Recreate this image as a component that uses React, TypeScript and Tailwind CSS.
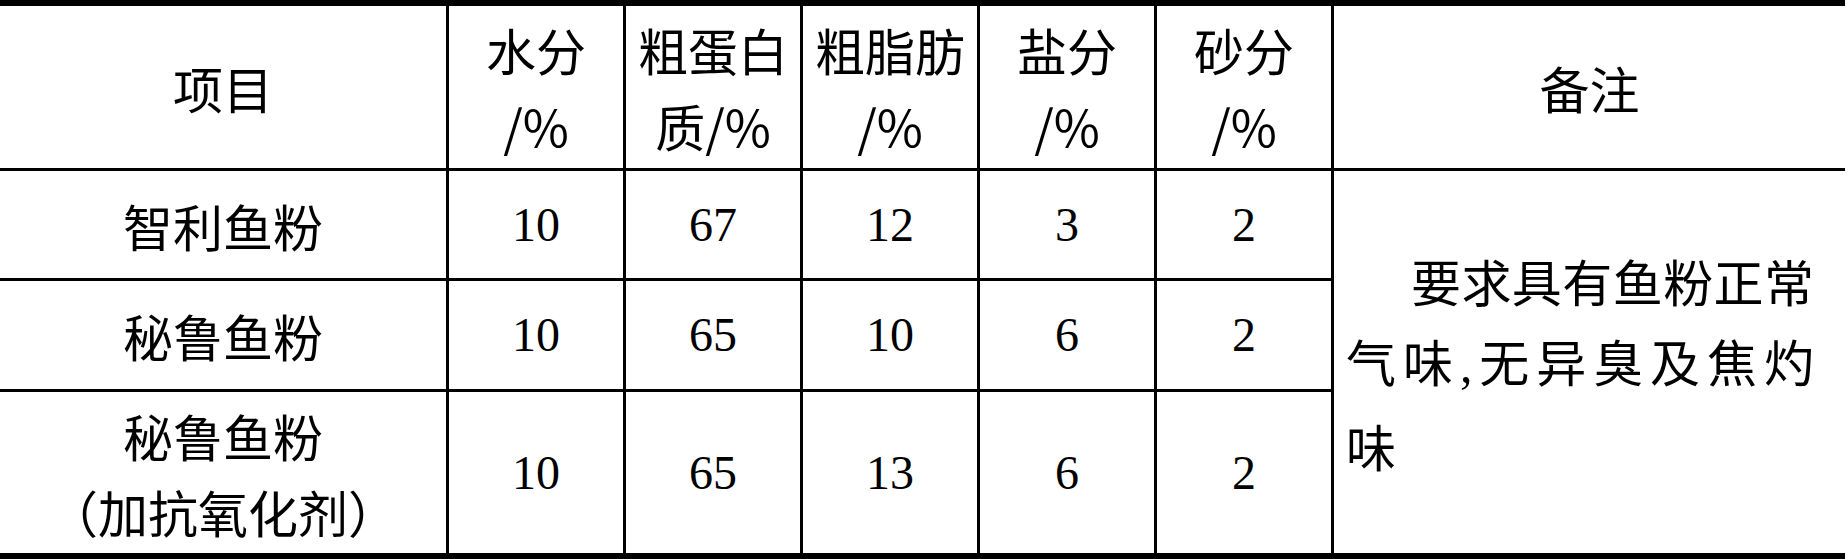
const cjk = "font-['Noto_Sans_CJK_SC','Noto_Sans_CJK_JP',sans-serif]";
const serif = "font-['Liberation_Serif','Times_New_Roman',serif]";

type Row = { name: string[]; values: string[] };

const headers: string[][] = [
  ["水分", "/%"],
  ["粗蛋白", "质/%"],
  ["粗脂肪", "/%"],
  ["盐分", "/%"],
  ["砂分", "/%"],
];

const rows: Row[] = [
  { name: ["智利鱼粉"], values: ["10", "67", "12", "3", "2"] },
  { name: ["秘鲁鱼粉"], values: ["10", "65", "10", "6", "2"] },
  { name: ["秘鲁鱼粉", "（加抗氧化剂）"], values: ["10", "65", "13", "6", "2"] },
];

function Cell({ children, className = "" }: { children: React.ReactNode; className?: string }) {
  return (
    <div className={`flex flex-col items-center justify-center bg-white text-center text-black ${className}`}>
      {children}
    </div>
  );
}

export default function App() {
  return (
    <div className="min-h-[559px] w-[1848px] bg-white">
      <div
        className={`grid w-[1845px] grid-cols-[446px_174px_174px_174px_174px_174px_511px] grid-rows-[162px_107px_108px_161px] gap-[3px] bg-black pt-[6px] pb-[6px] text-[50px] leading-[76px] ${cjk}`}
      >
        {/* header */}
        <Cell>项目</Cell>
        {headers.map((h, i) => (
          <Cell key={i}>
            {h.map((line, j) => (
              <span key={j} className="block whitespace-nowrap">
                {line}
              </span>
            ))}
          </Cell>
        ))}
        <Cell>备注</Cell>

        {/* body */}
        {rows.map((r, ri) => (
          <RowCells key={ri} row={r} first={ri === 0} />
        ))}
      </div>
    </div>
  );
}

function RowCells({ row, first }: { row: Row; first: boolean }) {
  return (
    <>
      <Cell>
        {row.name.map((n, i) => (
          <span key={i} className="block whitespace-nowrap">
            {n}
          </span>
        ))}
      </Cell>
      {row.values.map((v, i) => (
        <Cell key={i} className={`${serif} text-[48px]`}>
          {v}
        </Cell>
      ))}
      {first && (
        <div className="row-span-3 flex flex-col justify-center bg-white pl-[12px] pr-[31px] text-black leading-[80px]">
          <p className="whitespace-nowrap pl-[65px] text-justify [text-align-last:justify]">要求具有鱼粉正常</p>
          <p className="whitespace-nowrap text-justify [text-align-last:justify]">
            气味<span className={serif}>,</span>无异臭及焦灼
          </p>
          <p>味</p>
        </div>
      )}
    </>
  );
}
